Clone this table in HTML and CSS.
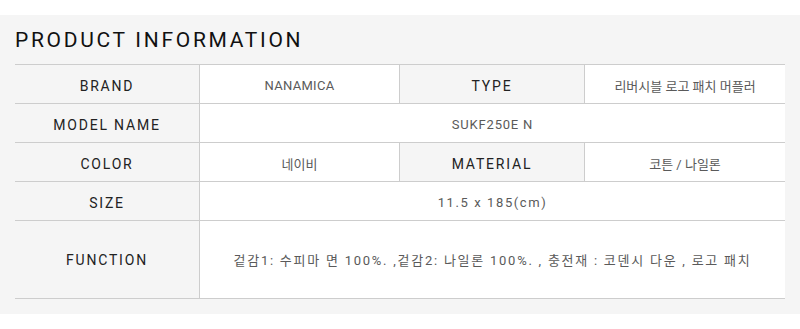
FILE: index.html
```html
<!DOCTYPE html>
<html lang="ko">
<head>
<meta charset="utf-8">
<title>Product Information</title>
<link rel="stylesheet" href="styles.css">
</head>
<body>
<section class="panel">
  <h2 class="title">PRODUCT INFORMATION</h2>
  <div class="info">
    <div class="label">BRAND</div>
    <div class="value sep">NANAMICA</div>
    <div class="label">TYPE</div>
    <div class="value ko">리버시블 로고 패치 머플러</div>

    <div class="label">MODEL NAME</div>
    <div class="value wide">SUKF250E N</div>

    <div class="label">COLOR</div>
    <div class="value sep ko">네이비</div>
    <div class="label">MATERIAL</div>
    <div class="value ko">코튼 / 나일론</div>

    <div class="label">SIZE</div>
    <div class="value wide num">11.5 x 185(cm)</div>

    <div class="label tall">FUNCTION</div>
    <div class="value wide tall fn">겉감1: 수피마 면 100%. ,겉감2: 나일론 100%. , 충전재 : 코덴시 다운 , 로고 패치</div>
  </div>
</section>
</body>
</html>
```
FILE: styles.css
```css
* { box-sizing: border-box; }
html, body { margin: 0; padding: 0; background: #fff; }
body { padding-top: 15px; font-family: Roboto, "Noto Sans CJK KR", sans-serif; }

.panel {
  background: #f5f5f5;
  padding: 15px 15px 15px;
}

.title {
  margin: 0 0 14px;
  font-family: Roboto, sans-serif;
  font-weight: 400;
  font-size: 21px;
  line-height: 20px;
  letter-spacing: 2.7px;
  color: #111;
}

.info {
  display: grid;
  grid-template-columns: 185px 200px 185px 200px;
  border-top: 1px solid #cdcdcd;
}

.label, .value {
  height: 39px;
  display: flex;
  align-items: center;
  justify-content: center;
  border-bottom: 1px solid #cdcdcd;
  padding-top: 3px;
}

.label {
  background: #f5f5f5;
  border-right: 1px solid #cdcdcd;
  font-size: 14px;
  letter-spacing: 1.8px;
  color: #222;
}

.value {
  background: #fff;
  font-size: 13px;
  letter-spacing: 0.3px;
  color: #5a5a5a;
}

.value.sep { border-right: 1px solid #cdcdcd; }
.value.ko { letter-spacing: 0; }
.value.wide { grid-column: span 3; letter-spacing: 0.8px; }
.value.num { letter-spacing: 1.6px; }
.value.fn { letter-spacing: 1.75px; }
.tall { height: 78px; padding-top: 0; }
```
